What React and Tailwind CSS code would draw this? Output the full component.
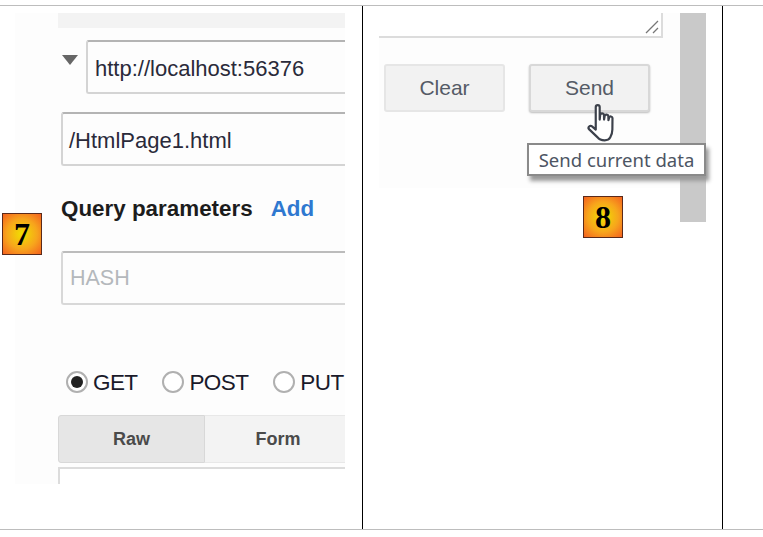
const sans = { fontFamily: '"Liberation Sans", Arial, sans-serif' };

function Badge({ children, className }) {
  return (
    <div
      className={`absolute flex h-[42px] w-[40px] items-center justify-center border border-[#5a2a1a] bg-[radial-gradient(circle,#f0e000_0%,#f7a51c_55%,#f4611f_100%)] font-['Liberation_Serif',serif] text-[32px] font-bold leading-none text-black ${className}`}
    >
      {children}
    </div>
  );
}

function Radio({ checked, label, className }) {
  return (
    <label className={`flex items-center ${className}`}>
      <span className="flex h-[22px] w-[22px] items-center justify-center rounded-full border-2 border-[#b0b0b0] bg-white">
        {checked && <span className="h-[12px] w-[12px] rounded-full bg-[#222]" />}
      </span>
      <span className="ml-[5px] mt-[2px] text-[22.500px] leading-none tracking-[-0.6px] text-[#1a1a2a]">{label}</span>
    </label>
  );
}

function HandCursor() {
  return (
    <svg width="35" height="44" viewBox="0 0 32 40" className="absolute left-[224px] top-[97px]">
      <path
        d="M8 3.500c0-2.200 3.600-2.200 3.600 0V15l.5-4.400c.3-1.800 3.300-1.600 3.400.2l.1 4.200.6-3.400c.4-1.700 3.200-1.400 3.300.4l.1 3.600.7-2.500c.5-1.500 3-1.100 3 .6l-.1 10.500c0 3.200-.7 5-2 7.300-1 1.800-2.600 2.500-5 2.500-2.700 0-5.200-.8-6.500-2.700L1.800 23.800c-1.300-1.700.9-3.900 2.800-2.500L8 24.200z"
        fill="#fff"
        stroke="#3c414b"
        strokeWidth="2"
        strokeLinejoin="round"
      />
    </svg>
  );
}

export default function App() {
  return (
    <div className="h-[537px] w-full overflow-hidden bg-white pt-[5px]" style={sans}>
      <div className="flex h-[525px] border-y border-y-[#bdbdbd]">
        {/* Left cell */}
        <div className="relative h-full w-[363px] shrink-0 border-r border-r-black pl-[15px] pt-[7px]">
          <Badge className="left-[2px] top-[207px]">7</Badge>

          <div className="h-[471px] w-[330px] overflow-hidden bg-[#fdfdfd]">
            <div className="ml-[43px] h-[15px] bg-[#f3f3f3]" />

            <div className="mt-[12px] flex items-start">
              <div className="ml-[47px] mt-[15px] h-0 w-0 border-x-[8px] border-t-[10px] border-x-transparent border-t-[#666]" />
              <div className="ml-[8px] flex h-[54px] flex-1 items-center rounded-l-[3px] border-2 border-r-0 border-[#d4d4d4] border-t-[#b4b4b4] pl-[7px] pt-[2px] text-[22px] text-[#2a2a3a]">
                http://localhost:56376
              </div>
            </div>

            <div className="ml-[46px] mt-[18px] flex h-[54px] items-center rounded-l-[3px] border-2 border-r-0 border-[#d4d4d4] border-t-[#b4b4b4] pl-[6px] pt-[2px] text-[22px] text-[#2a2a3a]">
              /HtmlPage1.html
            </div>

            <div className="ml-[46px] mt-[29px] flex items-baseline text-[22.400px] font-bold leading-[28px]">
              <span className="text-[#1c1c1c]">Query parameters</span>
              <span className="ml-[18px] text-[#2f78d0]">Add</span>
            </div>

            <div className="ml-[46px] mt-[28px] flex h-[54px] items-center rounded-l-[3px] border-2 border-r-0 border-[#d8d8d8] border-t-[#bcbcbc] pl-[7px] text-[21.500px] text-[#b4b8bc]">
              HASH
            </div>

            <div className="ml-[51px] mt-[65px] flex h-[24px] items-center whitespace-nowrap">
              <Radio checked label="GET" />
              <Radio label="POST" className="ml-[25px]" />
              <Radio label="PUT" className="ml-[25px]" />
            </div>

            <div className="ml-[43px] mt-[21px] flex h-[48px] text-[18px] font-bold text-[#4a4a4a]">
              <div className="flex w-[147px] items-center justify-center rounded-l-[3px] border border-[#d8d8d8] bg-[#e6e6e6]">
                Raw
              </div>
              <div className="flex flex-1 items-center justify-center border-y border-[#e8e8e8] bg-[#f3f3f3] pl-[6px]">
                Form
              </div>
            </div>

            <div className="ml-[43px] mt-[4px] h-[40px] border-2 border-r-0 border-[#dcdcdc] bg-white" />
          </div>
        </div>

        {/* Middle cell */}
        <div className="relative h-full w-[360px] shrink-0 border-r border-r-black pt-[7px]">
          <div className="flex items-start">
            <div className="ml-[16px] h-[175px] w-[301px] bg-[#fdfdfd]">
              <div className="relative h-[25px] w-[284px] border-b-2 border-r-2 border-[#dcdcdc] bg-white">
                <svg width="16" height="16" viewBox="0 0 16 16" className="absolute bottom-[1px] right-[1px]">
                  <path d="M2 14 14 2M9 14l5-5" stroke="#777" strokeWidth="1.300" />
                </svg>
              </div>
              <div className="ml-[5px] mt-[26px] flex gap-[24px] text-[21px] text-[#555b66]">
                <div className="flex h-[48px] w-[121px] items-center justify-center rounded-[3px] border-2 border-[#e6e6e6] bg-[#f2f2f2]">
                  Clear
                </div>
                <div className="flex h-[48px] w-[121px] items-center justify-center rounded-[3px] border-2 border-[#d8d8d8] bg-[#f2f2f2] shadow-[0_1px_2px_#bbb]">
                  Send
                </div>
              </div>
            </div>
            <div className="h-[209px] w-[26px] bg-[#c9c9c9]" />
          </div>

          <HandCursor />

          <div className="absolute left-[164px] top-[137px] flex h-[33px] w-[179px] items-center justify-center whitespace-nowrap border-2 border-[#8a8a8a] bg-white font-['Noto_Sans',sans-serif] text-[18.500px] text-[#4d5563] shadow-[3px_5px_4px_#9a9a9a]">
            Send current data
          </div>

          <Badge className="left-[220px] top-[190px] h-[41px]">8</Badge>
        </div>

        <div className="flex-1" />
      </div>
    </div>
  );
}
